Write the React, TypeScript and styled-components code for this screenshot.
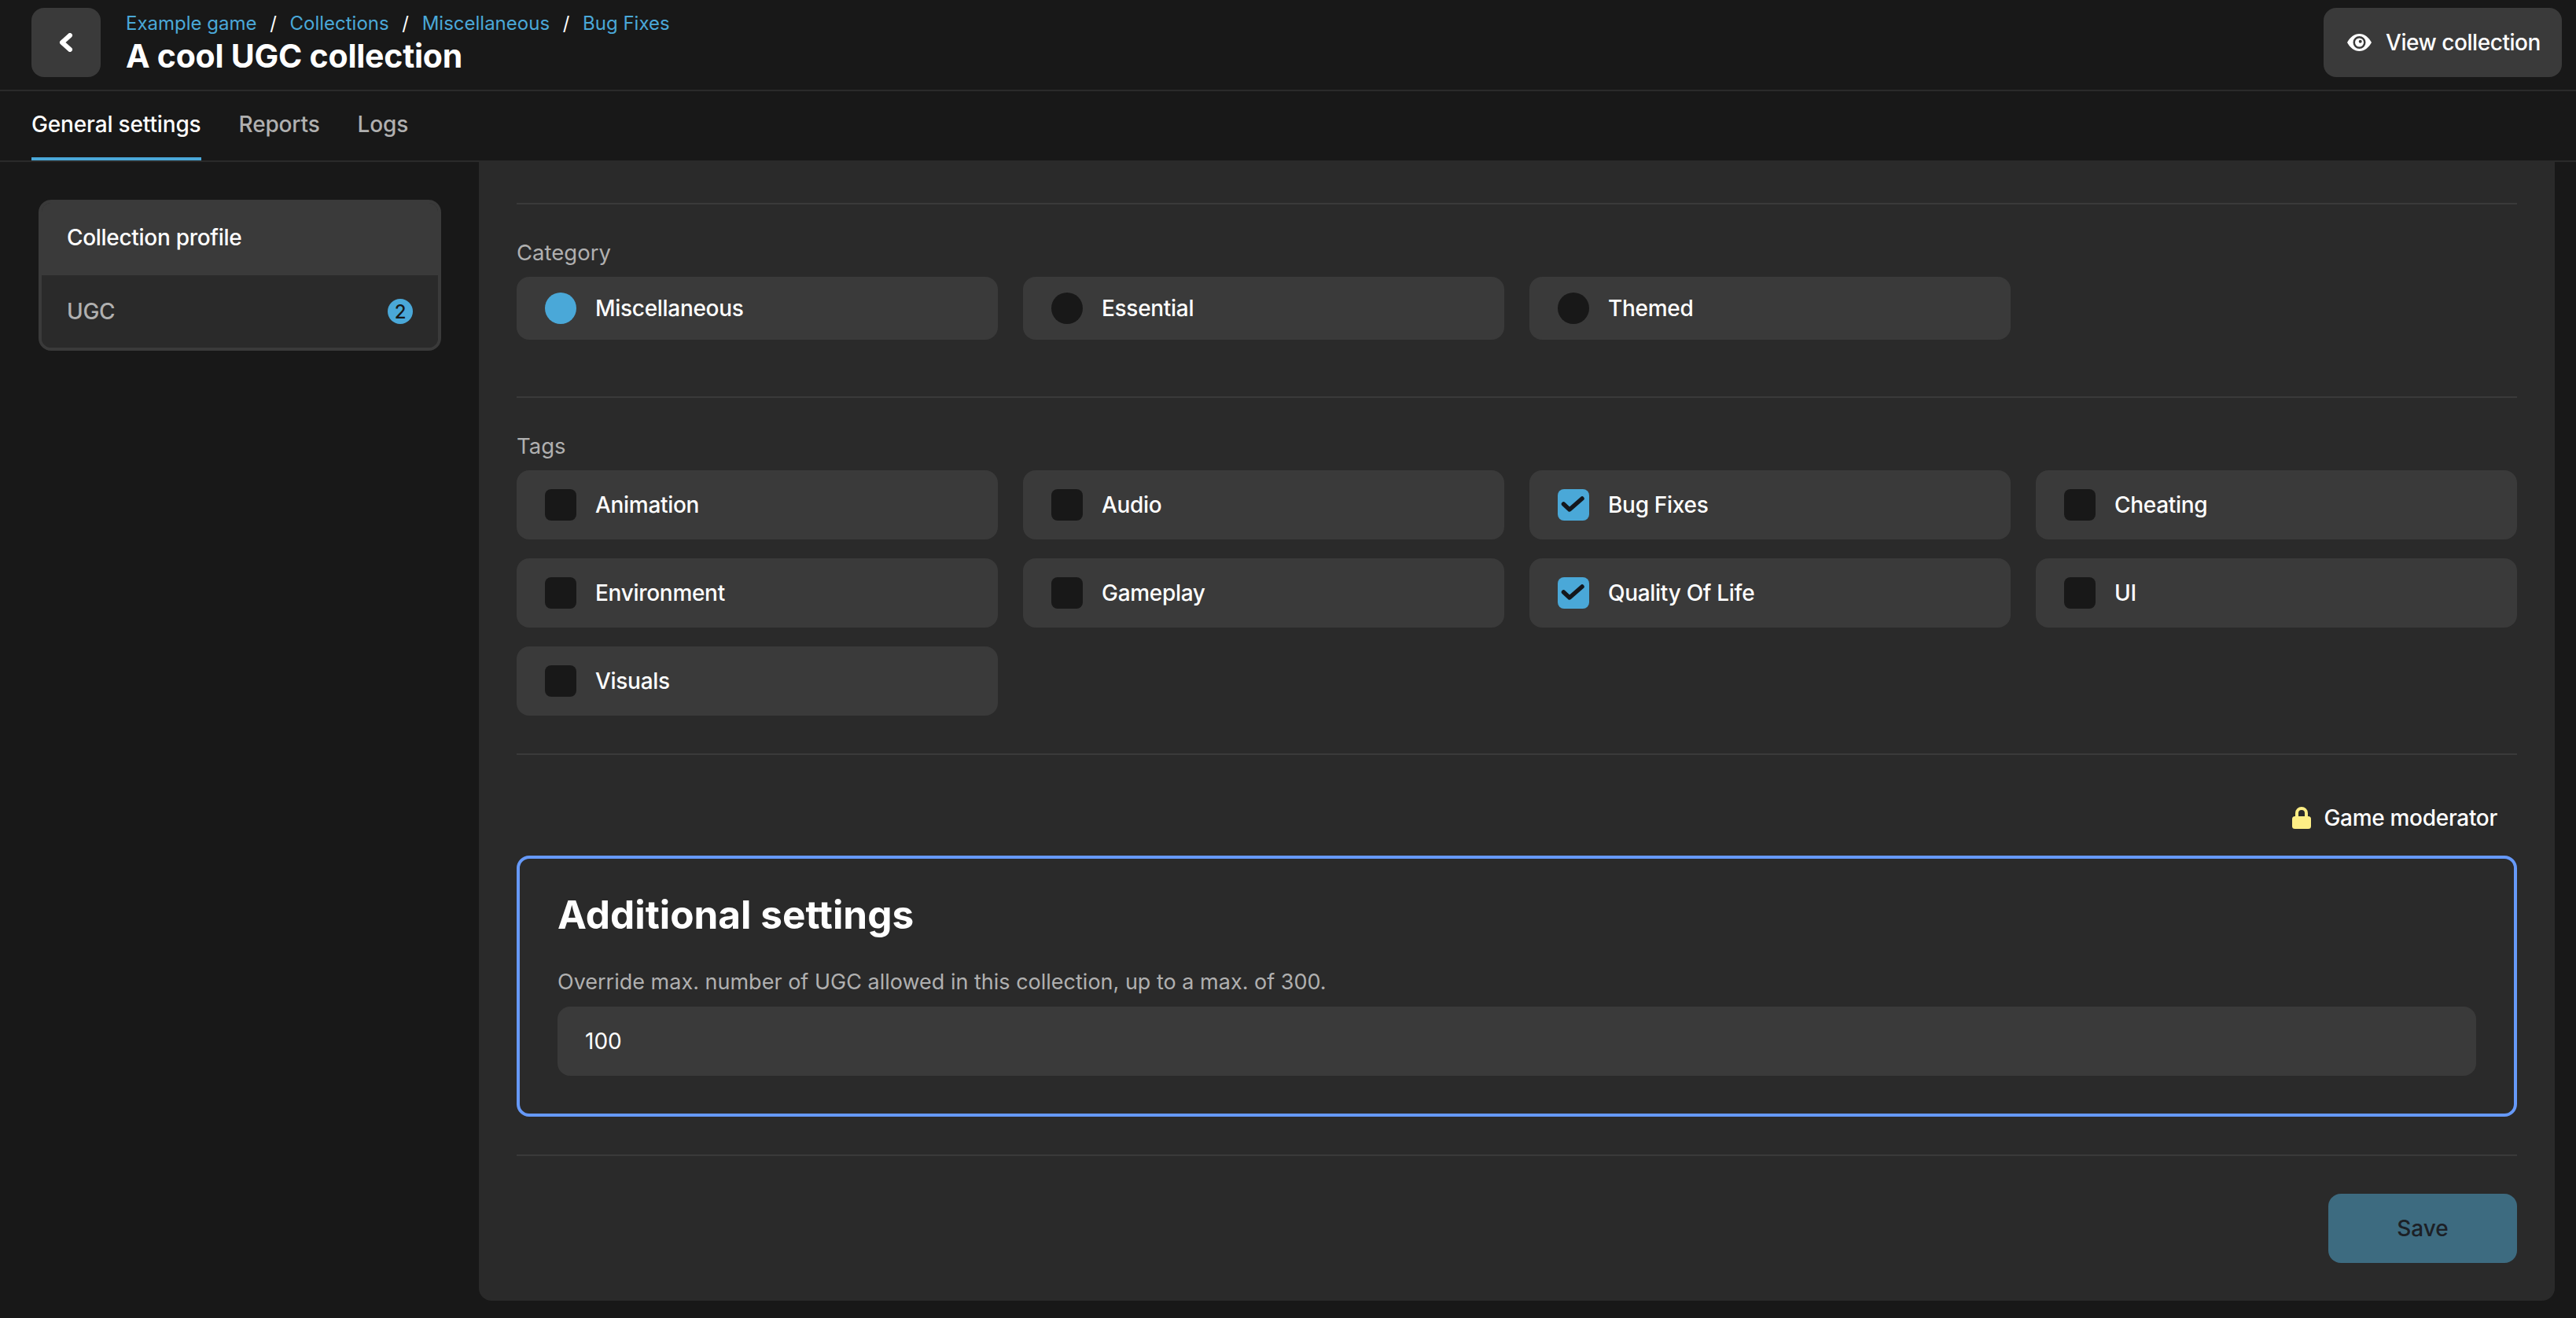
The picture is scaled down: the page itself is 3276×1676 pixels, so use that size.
import React from 'react';
import styled, { createGlobalStyle } from 'styled-components';

const GlobalStyle = createGlobalStyle`
  html, body {
    margin: 0;
    padding: 0;
    background: #181818;
    font-family: Inter, "Liberation Sans", sans-serif;
  }
  * {
    box-sizing: border-box;
  }
`;

const Page = styled.div`
  width: 3276px;
  height: 1676px;
  display: flex;
  flex-direction: column;
  overflow: hidden;
  color: #fff;
`;

const Header = styled.header`
  height: 116px;
  padding: 10px 18px 0 40px;
  display: flex;
  justify-content: space-between;
  align-items: flex-start;
  border-bottom: 2px solid #2a2a2a;
`;

const HeaderLeft = styled.div`
  display: flex;
  gap: 32px;
`;

const IconButton = styled.button`
  width: 88px;
  height: 88px;
  border: 0;
  border-radius: 16px;
  background: #3a3a3a;
  color: #fff;
  display: flex;
  align-items: center;
  justify-content: center;
  padding: 0;
`;

const TitleBlock = styled.div`
  display: flex;
  flex-direction: column;
`;

const Breadcrumbs = styled.nav`
  display: flex;
  align-items: center;
  height: 38px;
  font-size: 24px;
  font-weight: 400;
`;

const Crumb = styled.span`
  color: #4aa8d8;
`;

const Slash = styled.span`
  color: #fff;
  width: 42px;
  text-align: center;
`;

const Title = styled.h1`
  margin: 0;
  font-size: 41px;
  line-height: 46px;
  font-weight: 700;
  letter-spacing: -0.25px;
`;

const ViewButton = styled.button`
  width: 303px;
  height: 88px;
  border: 0;
  border-radius: 16px;
  background: #3a3a3a;
  color: #fff;
  font: inherit;
  font-size: 28px;
  font-weight: 500;
  letter-spacing: -0.45px;
  display: flex;
  align-items: center;
  padding: 0 0 0 30px;
  gap: 18px;
`;

const Tabs = styled.div`
  height: 90px;
  padding: 0 40px;
  display: flex;
  gap: 48px;
  border-bottom: 2px solid #2a2a2a;
`;

const Tab = styled.div<{ $active?: boolean }>`
  height: 88px;
  display: flex;
  align-items: center;
  font-size: 28px;
  font-weight: 500;
  letter-spacing: -0.15px;
  color: ${({ $active }) => ($active ? '#fff' : '#b0b0b0')};
  border-bottom: 4px solid ${({ $active }) => ($active ? '#4aa8d8' : 'transparent')};
`;

const Body = styled.div`
  flex: 1;
  display: flex;
  padding: 0 27px 22px 49px;
  min-height: 0;
`;

const Side = styled.aside`
  width: 512px;
  margin: 48px 48px 0 0;
`;

const SideCard = styled.div`
  border-radius: 16px;
  border: 4px solid #3a3a3a;
  background: #2a2a2a;
  overflow: hidden;
`;

const SideItem = styled.div<{ $active?: boolean }>`
  height: 92px;
  padding: 0 32px ${({ $active }) => ($active ? '4px' : '0')};
  display: flex;
  align-items: center;
  justify-content: space-between;
  font-size: 28px;
  font-weight: 500;
  letter-spacing: -0.3px;
  color: ${({ $active }) => ($active ? '#fff' : '#b0b0b0')};
  background: ${({ $active }) => ($active ? '#3a3a3a' : '#2a2a2a')};
`;

const Badge = styled.span`
  width: 32px;
  height: 32px;
  border-radius: 50%;
  background: #4aa8d8;
  color: #181818;
  font-size: 24px;
  display: flex;
  align-items: center;
  justify-content: center;
`;

const Panel = styled.main`
  flex: 1;
  background: #2a2a2a;
  border-radius: 0 0 16px 16px;
  padding: 52px 48px 48px;
  display: flex;
  flex-direction: column;
`;

const Divider = styled.hr<{ $after: number }>`
  width: 100%;
  height: 2px;
  border: 0;
  margin: 0 0 ${({ $after }) => $after}px;
  background: #3a3a3a;
  flex: none;
`;

const Section = styled.section<{ $after: number }>`
  margin-bottom: ${({ $after }) => $after}px;
`;

const Label = styled.div`
  font-size: 27.5px;
  line-height: 34px;
  color: #b0b0b0;
  margin-bottom: 14px;
`;

const OptionGrid = styled.div`
  display: grid;
  grid-template-columns: repeat(4, 612px);
  gap: 24px 32px;
`;

const Option = styled.label<{ $height: number }>`
  height: ${({ $height }) => $height}px;
  border-radius: 16px;
  background: #3a3a3a;
  padding-left: 36px;
  display: flex;
  align-items: center;
  gap: 24px;
  font-size: 28px;
  font-weight: 500;
  letter-spacing: -0.3px;
`;

const Radio = styled.span<{ $checked?: boolean }>`
  width: 40px;
  height: 40px;
  border-radius: 50%;
  background: ${({ $checked }) => ($checked ? '#4aa8d8' : '#181818')};
`;

const Check = styled.span<{ $checked?: boolean }>`
  width: 40px;
  height: 40px;
  border-radius: 8px;
  background: ${({ $checked }) => ($checked ? '#4aa8d8' : '#181818')};
  display: flex;
`;

const Moderator = styled.div`
  display: flex;
  justify-content: flex-end;
  align-items: center;
  gap: 16px;
  height: 36px;
  padding-right: 25px;
  margin-bottom: 30px;
  font-size: 28px;
  font-weight: 500;
  letter-spacing: -0.3px;
`;

const SettingsBox = styled.div`
  height: 332px;
  flex: none;
  border: 4px solid #6699f8;
  border-radius: 16px;
  padding: 43px 48px 0;
  margin-bottom: 48px;
`;

const SettingsTitle = styled.h2`
  margin: 0 0 41px;
  font-size: 49.5px;
  line-height: 56px;
  font-weight: 700;
`;

const SettingsHint = styled.div`
  font-size: 27px;
  line-height: 34px;
  color: #b0b0b0;
  margin-bottom: 14px;
`;

const ValueInput = styled.div`
  height: 88px;
  border-radius: 16px;
  background: #3a3a3a;
  padding-left: 35px;
  display: flex;
  align-items: center;
  font-size: 28px;
`;

const Footer = styled.div`
  display: flex;
  justify-content: flex-end;
`;

const SaveButton = styled.button`
  width: 240px;
  height: 88px;
  border: 0;
  border-radius: 16px;
  background: #3d6b80;
  color: #1c2026;
  font: inherit;
  font-size: 28px;
  font-weight: 500;
`;

const ChevronLeft = () => (
  <svg width="24" height="24" viewBox="0 0 24 24">
    <path d="M17 3 L7 12 L17 21" fill="none" stroke="currentColor" strokeWidth="6" strokeLinecap="round" strokeLinejoin="round" />
  </svg>
);

const EyeIcon = () => (
  <svg width="31" height="22" viewBox="0 0 31 22">
    <path fill="#fff" fillRule="evenodd" d="M15.500 0C9 0 3.500 4.500 0 11c3.500 6.500 9 11 15.500 11S27.500 17.500 31 11C27.500 4.500 22 0 15.500 0Zm0 3a8 8 0 1 1 0 16 8 8 0 0 1 0-16Z" />
    <path fill="#fff" fillRule="evenodd" d="M15.500 5.500a5.500 5.500 0 1 1 0 11 5.500 5.500 0 0 1 0-11Zm1.200 2.300a2 2 0 1 0 0 4 2 2 0 0 0 0-4Z" />
  </svg>
);

const LockIcon = () => (
  <svg width="24" height="28" viewBox="0 0 24 28">
    <path d="M6 13V8a6 6 0 0 1 12 0v5" fill="none" stroke="#fdee85" strokeWidth="4" />
    <rect x="0" y="12" width="24" height="16" rx="3.500" fill="#fdee85" />
  </svg>
);

const CheckMark = () => (
  <svg width="40" height="40" viewBox="0 0 40 40">
    <path d="M7.500 19 L15 26 L31 12" fill="none" stroke="#14171c" strokeWidth="5.500" strokeLinecap="round" strokeLinejoin="round" />
  </svg>
);

const crumbs = ['Example game', 'Collections', 'Miscellaneous', 'Bug Fixes'];
const categories = ['Miscellaneous', 'Essential', 'Themed'];
const tags = [
  { name: 'Animation' },
  { name: 'Audio' },
  { name: 'Bug Fixes', checked: true },
  { name: 'Cheating' },
  { name: 'Environment' },
  { name: 'Gameplay' },
  { name: 'Quality Of Life', checked: true },
  { name: 'UI' },
  { name: 'Visuals' },
];

const App: React.FC = () => {
  return (
    <Page>
      <GlobalStyle />
      <Header>
        <HeaderLeft>
          <IconButton>
            <ChevronLeft />
          </IconButton>
          <TitleBlock>
            <Breadcrumbs>
              {crumbs.map((crumb, i) => (
                <React.Fragment key={crumb}>
                  {i > 0 && <Slash>/</Slash>}
                  <Crumb>{crumb}</Crumb>
                </React.Fragment>
              ))}
            </Breadcrumbs>
            <Title>A cool UGC collection</Title>
          </TitleBlock>
        </HeaderLeft>
        <ViewButton>
          <EyeIcon />
          View collection
        </ViewButton>
      </Header>
      <Tabs>
        <Tab $active>General settings</Tab>
        <Tab>Reports</Tab>
        <Tab>Logs</Tab>
      </Tabs>
      <Body>
        <Side>
          <SideCard>
            <SideItem $active>Collection profile</SideItem>
            <SideItem>
              UGC
              <Badge>2</Badge>
            </SideItem>
          </SideCard>
        </Side>
        <Panel>
          <Divider $after={44} />
          <Section $after={72}>
            <Label>Category</Label>
            <OptionGrid>
              {categories.map((name, i) => (
                <Option key={name} $height={80}>
                  <Radio $checked={i === 0} />
                  {name}
                </Option>
              ))}
            </OptionGrid>
          </Section>
          <Divider $after={44} />
          <Section $after={48}>
            <Label>Tags</Label>
            <OptionGrid>
              {tags.map((tag) => (
                <Option key={tag.name} $height={88}>
                  <Check $checked={tag.checked}>{tag.checked && <CheckMark />}</Check>
                  {tag.name}
                </Option>
              ))}
            </OptionGrid>
          </Section>
          <Divider $after={62} />
          <Moderator>
            <LockIcon />
            Game moderator
          </Moderator>
          <SettingsBox>
            <SettingsTitle>Additional settings</SettingsTitle>
            <SettingsHint>Override max. number of UGC allowed in this collection, up to a max. of 300.</SettingsHint>
            <ValueInput>100</ValueInput>
          </SettingsBox>
          <Divider $after={48} />
          <Footer>
            <SaveButton>Save</SaveButton>
          </Footer>
        </Panel>
      </Body>
    </Page>
  );
};

export default App;
